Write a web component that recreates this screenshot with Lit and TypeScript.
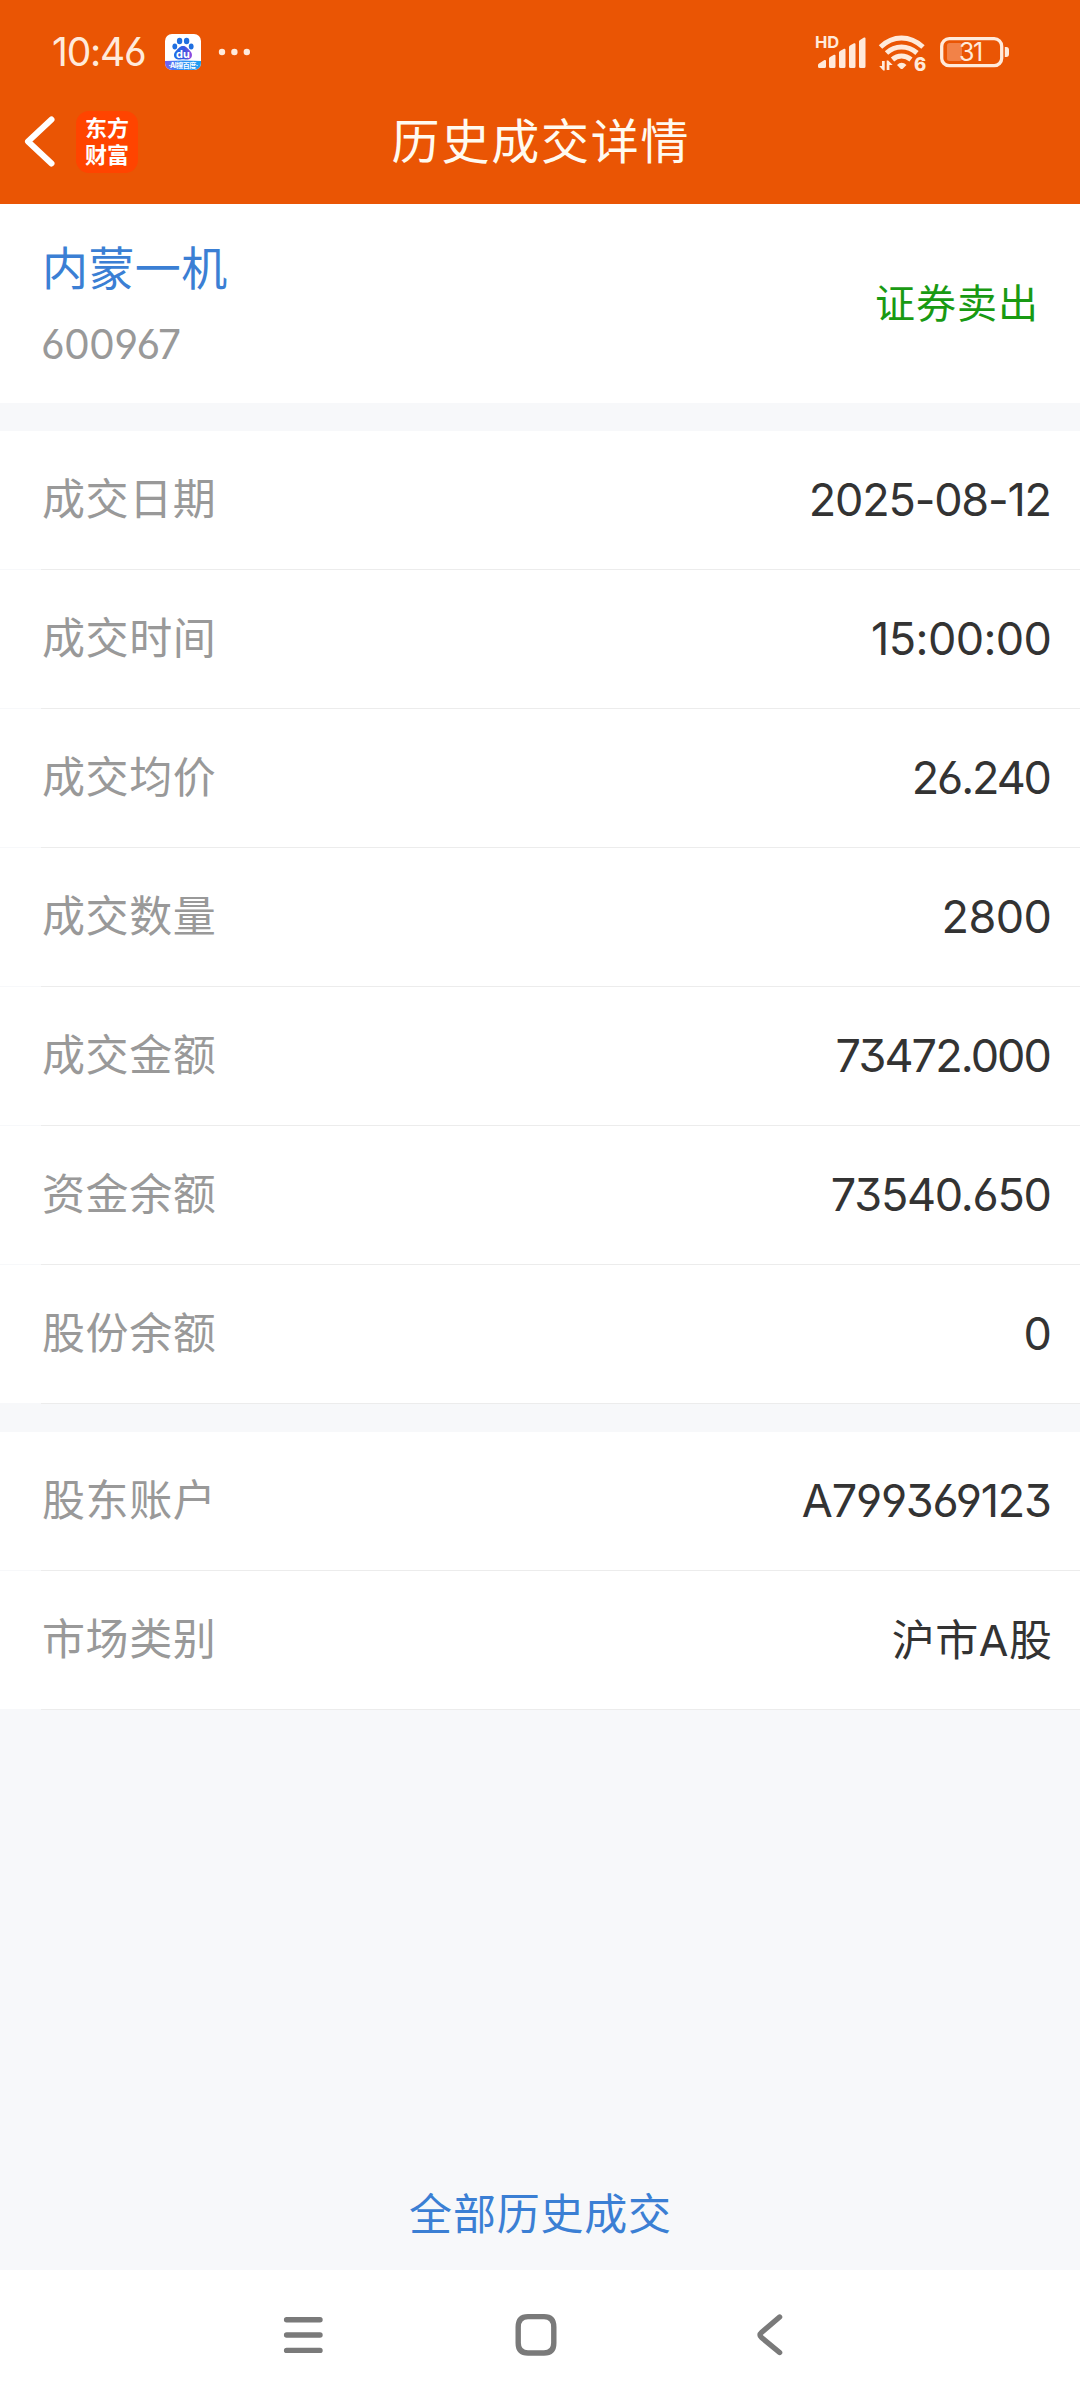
import { LitElement, html, css } from "lit";
import { customElement, property } from "lit/decorators.js";

interface Entry {
  label: string;
  value: string;
  tracking: number;
}

const TRADE: Entry[] = [
  { label: "成交日期", value: "2025-08-12", tracking: -1.2 },
  { label: "成交时间", value: "15:00:00", tracking: -0.6 },
  { label: "成交均价", value: "26.240", tracking: -2.1 },
  { label: "成交数量", value: "2800", tracking: -0.5 },
  { label: "成交金额", value: "73472.000", tracking: -1.9 },
  { label: "资金余额", value: "73540.650", tracking: -1.25 },
  { label: "股份余额", value: "0", tracking: 0 },
];

const ACCOUNT: Entry[] = [
  { label: "股东账户", value: "A799369123", tracking: -1.2 },
  { label: "市场类别", value: "沪市A股", tracking: 0.5 },
];

@customElement("status-bar")
class StatusBar extends LitElement {
  static styles = css`
    :host { display: flex; height: 104px; align-items: center; color: #ffeadb; }
    .time { font-size: 39px; line-height: 106px; letter-spacing: -1.2px; margin-left: 52px; width: 113px; }
    svg { display: block; flex: none; }
    .spacer { flex: 1; }
    .right { margin-right: 66px; }
    .hd { font: 700 16.5px Inter, sans-serif; }
    .six { font: 800 18.5px Inter, sans-serif; }
    .pct { font: 400 25px Inter, sans-serif; letter-spacing: -1.5px; }
    .du { font: 700 11px Inter, sans-serif; }
    .ai { font: 700 7px Inter, "Noto Sans CJK SC", sans-serif; letter-spacing: -0.5px; }
  `;
  render() {
    return html`
      <div class="time">10:46</div>
      <svg width="90" height="104" viewBox="165 0 90 104">
        <defs>
          <linearGradient id="band" x1="0" x2="1"><stop offset="0" stop-color="#7a5cf0" /><stop offset=".4" stop-color="#2f8df5" /><stop offset="1" stop-color="#1fa0f0" /></linearGradient>
          <linearGradient id="paw" x1="0" x2="1"><stop offset="0" stop-color="#1f6fe8" /><stop offset=".6" stop-color="#3a56e0" /><stop offset="1" stop-color="#9a4be0" /></linearGradient>
          <clipPath id="tile"><rect x="165" y="34" width="36" height="36" rx="7" /></clipPath>
        </defs>
        <g clip-path="url(#tile)">
          <rect x="165" y="34" width="36" height="36" fill="#fff" />
          <path d="M165 61Q183 60 201 61V70H165Z" fill="url(#band)" />
        </g>
        <g fill="#1f6fe0">
          <ellipse cx="179.600" cy="41" rx="2.700" ry="3.300" />
          <ellipse cx="186.600" cy="41" rx="2.700" ry="3.300" />
          <ellipse cx="174.800" cy="46.400" rx="2.400" ry="3" />
          <ellipse cx="191.200" cy="46.400" rx="2.400" ry="3" />
        </g>
        <path d="M183 46c3.500 0 4.500 2.500 6.500 4.300 4 3.500 3 8.700-1.500 9.200-2 .2-3-.3-5-.3s-3 .5-5 .3c-4.500-.5-5.500-5.700-1.500-9.200 2-1.800 3-4.300 6.500-4.300z" fill="url(#paw)" />
        <text class="du" x="183" y="57.800" text-anchor="middle" fill="#fff">du</text>
        <text class="ai" x="183" y="68.300" text-anchor="middle" fill="#fff">·AI搜百度·</text>
        <g fill="#ffeadb"><circle cx="222" cy="52" r="3.200" /><circle cx="234.400" cy="52" r="3.200" /><circle cx="246.800" cy="52" r="3.200" /></g>
      </svg>
      <div class="spacer"></div>
      <svg class="right" width="200" height="104" viewBox="814 0 200 104" fill="#ffeadb">
        <text class="hd" x="815" y="48">HD</text>
        <path d="M818 66.500V65q0-1 1-1.600l5.500-3.400q1.500-.5 1.500 1v5.500q0 1.500-1.500 1.500h-5q-1.500 0-1.500-1.500z" />
        <path d="M829 58.500q0-1 1-1.500l4-2.200q1.500-.6 1.500 1V66.500q0 1.500-1.500 1.500h-3.500q-1.500 0-1.500-1.500z" />
        <path d="M839 52.500q0-1 1-1.500l4-2.200q1.500-.6 1.500 1V66.500q0 1.500-1.500 1.500h-3.500q-1.500 0-1.500-1.500z" />
        <path d="M849 47q0-1 1-1.500l4-2.200q1.500-.6 1.500 1V66.500q0 1.500-1.500 1.500h-3.500q-1.500 0-1.500-1.500z" />
        <path d="M859 41.500q0-1 1-1.500l4-2.400q1.500-.6 1.500 1V66.500q0 1.500-1.500 1.500h-3.500q-1.500 0-1.500-1.500z" />
        <g fill="none" stroke="#ffeadb" stroke-width="5">
          <path d="M880.500 47Q890 38 901.500 38T923 47" />
          <path d="M886.500 53Q893 47 901.500 47T917 53" />
          <path d="M892.500 59.500Q896.500 56 901.500 56T911 59.500" />
        </g>
        <path d="M897 65Q901.500 60.500 906.500 65L903 68.500Q901.700 69.700 900.400 68.500Z" />
        <path d="M884.700 61v9.500h-1.500l-4-4.500h2.800v-5zM886.700 70v-9.500h1.500l4.500 4.500h-3.300v5z" />
        <text class="six" x="914" y="70.500">6</text>
        <rect x="941.700" y="38.700" width="60" height="27" rx="7.500" fill="none" stroke="#ffeadb" stroke-width="3.300" />
        <rect x="947" y="43" width="15" height="18" rx="2.500" fill="#f28248" />
        <text class="pct" x="959" y="61">31</text>
        <path d="M1004.800 47h1.500q2.700 0 2.700 3v4q0 3-2.700 3h-1.500z" />
      </svg>
    `;
  }
}

@customElement("detail-row")
class DetailRow extends LitElement {
  @property({ attribute: false }) entry!: Entry;
  static styles = css`
    :host { display: block; background: linear-gradient(#f7f8fa, #f7f8fa) left bottom / 41px 1px no-repeat #fff; padding-left: 41px; }
    .row { display: flex; justify-content: space-between; height: 138px; line-height: 138px; border-bottom: 1px solid #ececec; padding: 0 28px 0 1px; }
    .label { color: #999; font-size: 43px; letter-spacing: 0.6px; line-height: 137px; }
    .value { color: #333; font-size: 45px; }
    .cjk { font-size: 43px; }
  `;
  render() {
    const { label, value, tracking } = this.entry;
    return html`<div class="row">
      <span class="label">${label}</span>
      <span class="value ${/[^\x00-\x7f]/.test(value) ? "cjk" : ""}" style="letter-spacing:${tracking}px;margin-right:${-tracking}px">${value}</span>
    </div>`;
  }
}

@customElement("app-root")
class AppRoot extends LitElement {
  static styles = css`
    :host { display: flex; flex-direction: column; width: 1080px; height: 2400px; background: #f7f8fa; font-family: Inter, "Noto Sans CJK SC", sans-serif; font-feature-settings: "cv03", "cv04", "cv09"; }
    .head { background: #ea5504; height: 204px; }
    .nav { display: grid; grid-template-columns: 200px 1fr 200px; height: 76px; align-items: center; }
    .left { display: flex; align-items: center; gap: 19px; padding-left: 23px; }
    .logo { width: 62px; height: 62px; box-sizing: border-box; border-radius: 13px; background: #ff4400; color: #fff; font: 700 22px/27px "Noto Sans CJK SC", sans-serif; text-align: center; padding-top: 2px; margin-top: -1px; }
    .title { color: #fffaf0; font-size: 48px; line-height: 76px; letter-spacing: 1.8px; text-align: center; padding-left: 2px; }
    .stock { display: flex; justify-content: space-between; align-items: center; height: 199px; background: #fff; padding: 0 41px 0 42px; }
    .name { color: #3b7fd4; font-size: 46px; line-height: 70px; letter-spacing: 0.4px; }
    .code { color: #999; font-size: 41px; line-height: 60px; letter-spacing: -0.8px; margin: 11px 0 0 -1px; }
    .side { color: #199a13; font-size: 40px; letter-spacing: 1px; padding-bottom: 5px; }
    .gap { height: 28px; }
    .fill { flex: 1; }
    .all { color: #3b7fd4; font-size: 43px; line-height: 60px; letter-spacing: 0.8px; text-align: center; margin-bottom: 26px; padding-left: 1px; }
    .keys { height: 130px; background: #fff; }
    svg { display: block; }
  `;
  render() {
    return html`
      <div class="head">
        <status-bar></status-bar>
        <div class="nav">
          <div class="left">
            <svg width="34" height="56" viewBox="0 0 34 56"><path d="M28.500 5.500L5 27.500L28.500 49.500" fill="none" stroke="#fff" stroke-width="6" stroke-linecap="round" stroke-linejoin="round" /></svg>
            <div class="logo"><div>东方</div><div>财富</div></div>
          </div>
          <div class="title">历史成交详情</div>
        </div>
      </div>
      <div class="stock">
        <div><div class="name">内蒙一机</div><div class="code">600967</div></div>
        <div class="side">证券卖出</div>
      </div>
      <div class="gap"></div>
      ${TRADE.map((e) => html`<detail-row .entry=${e}></detail-row>`)}
      <div class="gap"></div>
      ${ACCOUNT.map((e) => html`<detail-row .entry=${e}></detail-row>`)}
      <div class="fill"></div>
      <div class="all">全部历史成交</div>
      <div class="keys">
        <svg width="1080" height="130" viewBox="0 2270 1080 130" fill="none" stroke="#7a7a7a" stroke-width="5.400" stroke-linecap="round" stroke-linejoin="round">
          <path d="M286.600 2319.800H320M286.600 2335H320M286.600 2350.400H320" />
          <path d="M528 2316.600H544Q553.800 2316.600 553.800 2327V2343Q553.800 2353 544 2353H528Q518.200 2353 518.200 2343V2327Q518.200 2316.600 528 2316.600Z" />
          <path d="M779.600 2317L761.500 2332.500Q758.500 2335 761.500 2337.500L779.600 2352.500" />
        </svg>
      </div>
    `;
  }
}
